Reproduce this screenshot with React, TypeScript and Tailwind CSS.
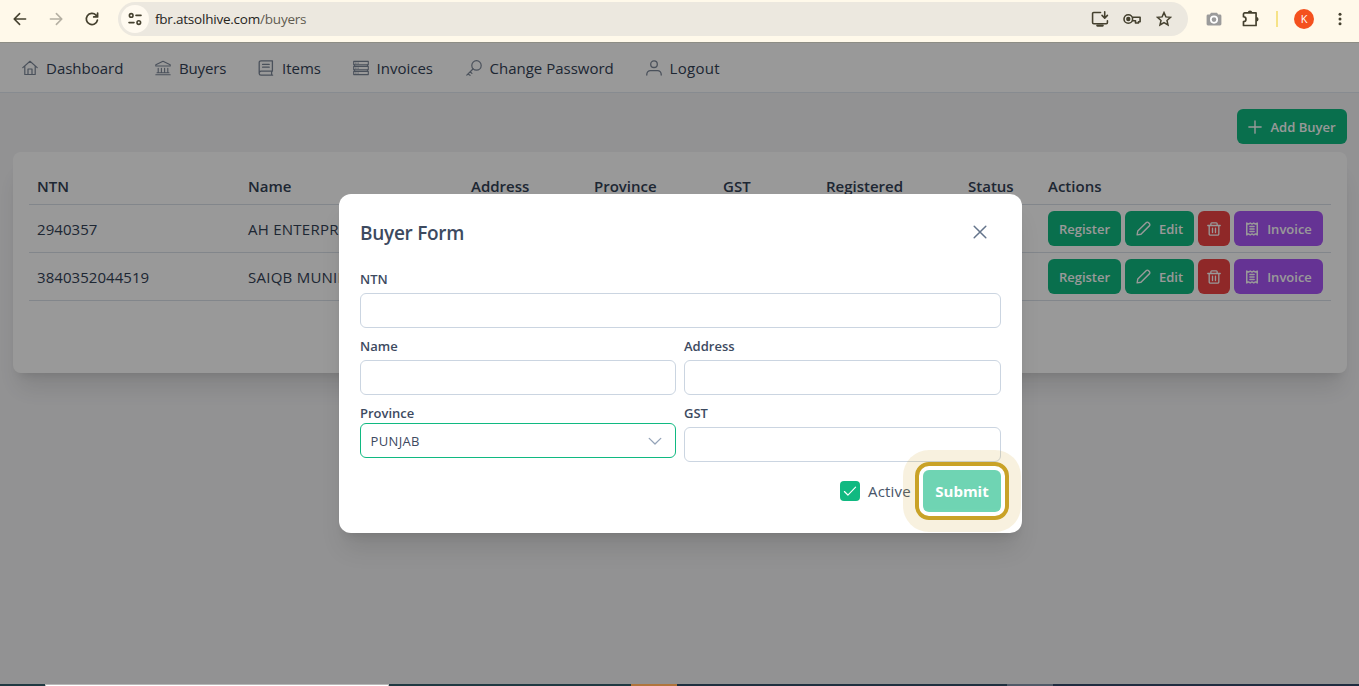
import React, { useState } from 'react';

type IconProps = { className?: string };

const Svg: React.FC<IconProps & { children: React.ReactNode; width?: number }> = ({ className = 'w-4 h-4', children, width = 1.1 }) => (
  <svg
    viewBox="0 0 16 16"
    className={`${className} shrink-0`}
    fill="none"
    stroke="currentColor"
    strokeWidth={width}
    strokeLinecap="round"
    strokeLinejoin="round"
  >
    {children}
  </svg>
);

const HomeIcon = () => (
  <Svg width={1.2}>
    <path d="M.8 7.6 8 1.3l7.2 6.3M2.8 6.2v8.3h10.4V6.2M6 14.5V9h4v5.5" />
  </Svg>
);

const BankIcon = () => (
  <Svg>
    <path d="M.8 6V4.8L8 1.3l7.2 3.5V6zM3.2 8.2v4M6.4 8.2v4M9.6 8.2v4M12.8 8.2v4M2 12.8h12M.8 14.8h14.4" />
  </Svg>
);

const BookIcon = () => (
  <Svg width={1.3}>
    <path d="M14.4 11.2V.8H3A1.8 1.8 0 0 0 1.2 2.6v10.8a1.8 1.8 0 0 0 1.8 1.8h11.6M1.2 13.2a1.9 1.9 0 0 1 1.8-2h11.4M13.6 11.2v4M4.6 4.4h6.6M4.6 7.2h6.6" />
  </Svg>
);

const ServerIcon = () => (
  <Svg width={1.1}>
    <path d="M.7 1.4h14.6v3.4H.7zM.7 6.4h14.6v3.4H.7zM.7 11.4h14.6v3.2H.7z" />
    <path d="M2.8 3.1h.2M5 3.1h.2M2.8 8.1h.2M5 8.1h.2M2.8 13h.2M5 13h.2M1.6 4.8v1.6M14.4 4.8v1.6M1.6 9.8v1.6M14.4 9.8v1.6" />
  </Svg>
);

const KeyIcon = () => (
  <Svg width={1.2}>
    <circle cx="10.5" cy="5.4" r="4.7" />
    <path d="M7.2 8.8.8 15.1M2 14l2 1.3M4.2 11.8l1.7 1.6" />
  </Svg>
);

const UserIcon = () => (
  <Svg width={1.3}>
    <circle cx="8" cy="4.2" r="3.3" />
    <path d="M.8 15v-.8a3.6 3.6 0 0 1 3.6-3.6h7.2a3.6 3.6 0 0 1 3.6 3.6v.8" />
  </Svg>
);

const PencilIcon = () => (
  <Svg className="w-[15px] h-[15px]" width={1.5}>
    <path d="M1.2 14.8l.7-4.1L10.8 1.8a1.8 1.8 0 0 1 2.6 0l.8.8a1.8 1.8 0 0 1 0 2.6l-8.9 8.9z" />
  </Svg>
);

const TrashIcon = () => (
  <Svg className="w-3.5 h-3.5 mt-px" width={1.5}>
    <path d="M.9 4h14.2M4.4 4V1.9a1 1 0 0 1 1-1h5.2a1 1 0 0 1 1 1V4M2.5 4v9.6a1.5 1.5 0 0 0 1.5 1.5h8a1.5 1.5 0 0 0 1.5-1.5V4M6.3 7v5M9.7 7v5" />
  </Svg>
);

const ReceiptIcon = () => (
  <Svg className="w-3.5 h-3.5 mt-px" width={1.7}>
    <path d="M2 1.2l2 1.2 2-1.2 2 1.2 2-1.2 2 1.2 2-1.2v13.6l-2-1.2-2 1.2-2-1.2-2 1.2-2-1.2-2 1.2zM5.6 5.2h4.8M5.6 8h4.8M5.6 10.8h4.8" />
  </Svg>
);

const NAV_ITEMS = [
  { label: 'Dashboard', Icon: HomeIcon, box: 'w-[133px]' },
  { label: 'Buyers', Icon: BankIcon, box: 'w-[103px] tracking-[-0.15px]' },
  { label: 'Items', Icon: BookIcon, box: 'w-[94.5px]' },
  { label: 'Invoices', Icon: ServerIcon, box: 'w-[113px]' },
  { label: 'Change Password', Icon: KeyIcon, box: 'w-[180px]' },
  { label: 'Logout', Icon: UserIcon, box: 'w-[100px] tracking-[0.3px]' },
];

const COLUMNS = [
  { label: 'NTN', box: 'w-[211px]' },
  { label: 'Name', box: 'w-[223px]' },
  { label: 'Address', box: 'w-[123px]' },
  { label: 'Province', box: 'w-[129px]' },
  { label: 'GST', box: 'w-[103px]' },
  { label: 'Registered', box: 'w-[142px]' },
  { label: 'Status', box: 'w-[80px]' },
  { label: 'Actions', box: 'w-[291px]' },
];

const BUYERS = [
  { ntn: '2940357', name: 'AH ENTERPRISES' },
  { ntn: '3840352044519', name: 'SAIQB MUNIR' },
];

const BrowserBar = () => (
  <div className="h-[42px] shrink-0 bg-[#fff9ea] flex items-start pt-[3px] text-[#45412f]">
    <div className="w-[118px] h-8 flex items-center pl-1">
      <span className="w-8 flex justify-center">
        <Svg width={1.6}><path d="M13.6 8H2.4M7.6 2.6 2.2 8l5.4 5.4" /></Svg>
      </span>
      <span className="w-8 ml-1 flex justify-center text-[#b5b0a3]">
        <Svg width={1.6}><path d="M2.4 8h11.2M8.4 2.6 13.8 8l-5.4 5.4" /></Svg>
      </span>
      <span className="w-8 ml-1 flex justify-center">
        <Svg width={1.7}><path d="M13.4 9.2A5.6 5.6 0 1 1 12 4.1l1.4 1.5M13.6 2v3.9H9.7" /></Svg>
      </span>
    </div>
    <div className="w-[1070px] h-[34px] -mt-px rounded-full bg-[#ece8df] flex items-center pl-[3px] pr-2">
      <span className="w-7 h-7 rounded-full bg-[#fffaf0] flex items-center justify-center">
        <Svg width={1.6}>
          <circle cx="4.2" cy="4.4" r="1.8" />
          <path d="M9 4.4h5M2 11.6h5" />
          <circle cx="11.8" cy="11.6" r="1.8" />
        </Svg>
      </span>
      <span className="ml-1.5 pt-0.5 text-[13.5px] leading-none tracking-[-0.22px] text-[#26241c] whitespace-nowrap">
        fbr.atsolhive.com<span className="text-[#5f5b50]">/buyers</span>
      </span>
      <span className="w-8 ml-auto flex justify-center">
        <Svg className="w-[18px] h-[18px]" width={1.4}>
          <path d="M8.5 2.2H2.4a1 1 0 0 0-1 1v8a1 1 0 0 0 1 1h11.2a1 1 0 0 0 1-1V9.6M12.2 1.5v5.4M9.8 4.8l2.4 2.4 2.4-2.4" />
          <path d="M5.6 13.8h4.8" strokeWidth="2" />
        </Svg>
      </span>
      <span className="w-8 flex justify-center">
        <svg viewBox="0 0 18 12" className="w-[18px] h-3" fill="none" stroke="currentColor" strokeWidth="1.6" strokeLinejoin="round">
          <circle cx="5.3" cy="6" r="4.3" />
          <circle cx="5.3" cy="6" r="1.4" fill="currentColor" />
          <path d="M9.2 4.2h7.9v4.6h-1.6V10h-3V7.8H9.2" />
        </svg>
      </span>
      <span className="w-8 flex justify-center">
        <Svg width={1.5}><path strokeLinejoin="miter" d="M8 1.6l1.9 4.3 4.6.4L11 9.4l1 4.6-4-2.4L4 14l1-4.6-3.5-3.1 4.6-.4z" /></Svg>
      </span>
    </div>
    <span className="w-8 h-8 ml-2.5 flex items-center justify-center text-[#9b9b9b]">
      <svg viewBox="0 0 16 14" className="w-4 h-3.5">
        <path fill="currentColor" d="M5 .8h6l1.2 1.8H14A1.4 1.4 0 0 1 15.4 4v8a1.4 1.4 0 0 1-1.4 1.4H2A1.4 1.4 0 0 1 .6 12V4A1.4 1.4 0 0 1 2 2.6h1.8z" />
        <circle cx="8" cy="7.6" r="3.2" fill="#9b9b9b" stroke="#fff" strokeWidth="1.7" />
      </svg>
    </span>
    <span className="w-8 h-8 ml-1 flex items-center justify-center">
      <Svg className="w-[18px] h-[18px]" width={1.5}>
        <path d="M3.2 2.6h10.2v11.2H2.2v-3.4a2.2 2.2 0 0 0 0-4.4V3.6a1 1 0 0 1 1-1z" />
        <path fill="currentColor" stroke="none" d="M6 2.4a2 2 0 0 1 4 0zM13.6 6.2a2 2 0 0 1 0 4z" />
      </Svg>
    </span>
    <span className="w-0.5 h-4 mt-2 ml-2.5 bg-[#f6e388]" />
    <span className="w-5 h-5 mt-1.5 ml-4 rounded-full bg-[#f4511e] text-white text-[11px] flex items-center justify-center">K</span>
    <span className="w-8 h-8 ml-2.5 flex items-center justify-center">
      <Svg>
        <g fill="currentColor" stroke="none">
          <circle cx="8" cy="3.2" r="1.5" />
          <circle cx="8" cy="8" r="1.5" />
          <circle cx="8" cy="12.8" r="1.5" />
        </g>
      </Svg>
    </span>
  </div>
);

const NavBar = () => (
  <nav className="h-[50px] bg-white border-b border-[#e2e8f0] flex items-center pt-0.5 pl-[22px] text-[15px] text-[#334155]">
    {NAV_ITEMS.map(({ label, Icon, box }) => (
      <a key={label} className={`${box} flex items-center gap-2 whitespace-nowrap`}>
        <span className="-mt-px text-[#7c8798]"><Icon /></span>
        {label}
      </a>
    ))}
  </nav>
);

const buttonBase = 'h-[35px] rounded-md text-white text-[13px] font-semibold flex items-center justify-center gap-2 whitespace-nowrap';

const RowActions = () => (
  <div className="flex gap-1">
    <button className={`${buttonBase} w-[73px] bg-[#10b981]`}><span className="pt-[3px]">Register</span></button>
    <button className={`${buttonBase} w-[69px] bg-[#10b981]`}><PencilIcon /><span className="pt-[3px]">Edit</span></button>
    <button className={`${buttonBase} w-8 bg-[#ef4444]`}><TrashIcon /></button>
    <button className={`${buttonBase} w-[89px] bg-[#a855f7]`}><ReceiptIcon /><span className="pt-[3px]">Invoice</span></button>
  </div>
);

const BuyersTable = () => (
  <div className="h-[221px] rounded-lg bg-white shadow-xl p-4">
    <table className="w-[1302px] table-fixed border-collapse text-[15px] text-[#334155]">
      <thead>
        <tr className="h-9 border-b border-[#d9e0e8] text-left">
          {COLUMNS.map((col) => (
            <th key={col.label} className={`${col.box} px-2 py-0 font-semibold`}>{col.label}</th>
          ))}
        </tr>
      </thead>
      <tbody>
        {BUYERS.map((buyer) => (
          <tr key={buyer.ntn} className="h-12 border-b border-[#d9e0e8]">
            <td className="px-2 pt-0.5 tracking-[0.05px]">{buyer.ntn}</td>
            <td className="px-2 pt-0.5 whitespace-nowrap tracking-[0.25px]">{buyer.name}</td>
            <td colSpan={5} />
            <td className="px-2"><RowActions /></td>
          </tr>
        ))}
      </tbody>
    </table>
  </div>
);

const inputStyle = 'block w-full h-[35px] rounded-md border border-[#cbd5e1] bg-white px-2.5 text-[13px] outline-none';

const Field: React.FC<{ label: string }> = ({ label }) => (
  <div>
    <label className="block h-5 leading-5 mb-1 text-[13px] font-semibold">{label}</label>
    <input className={inputStyle} />
  </div>
);

const BuyerForm = () => {
  const [active, setActive] = useState(true);

  return (
    <div className="w-[683px] h-[339px] rounded-xl bg-white shadow-xl pt-[17px] px-[21px] text-[#3d4a5f]">
      <div className="h-[42px] flex items-center justify-between">
        <h2 className="pt-0.5 text-[19px] tracking-[-0.28px] font-semibold">Buyer Form</h2>
        <button className="w-[42px] h-[42px] flex items-center justify-center text-[#64748b]">
          <Svg width={1.5}><path d="M2.2 2.2l11.6 11.6M13.8 2.2 2.2 13.8" /></Svg>
        </button>
      </div>

      <div className="mt-4">
        <Field label="NTN" />
      </div>
      <div className="mt-2 grid grid-cols-[316px_317px] gap-2">
        <Field label="Name" />
        <Field label="Address" />
        <div>
          <label className="block h-5 leading-5 text-[13px] font-semibold">Province</label>
          <div className="h-[35px] rounded-md border border-[#10b981] pl-[9.5px] pr-[13px] flex items-center justify-between text-[13px]">
            <span className="pt-0.5 tracking-[0.35px]">PUNJAB</span>
            <span className="text-[#94a3b8]">
              <Svg className="w-3.5 h-3.5" width={1.5}><path d="M1.4 5 8 11.4 14.6 5" /></Svg>
            </span>
          </div>
        </div>
        <Field label="GST" />
      </div>

      <div className="mt-2 flex items-center justify-end">
        <button
          onClick={() => setActive(!active)}
          className="w-5 h-5 rounded bg-[#10b981] text-white flex items-center justify-center"
        >
          {active && <Svg className="w-3.5 h-3.5" width={1.3}><path d="M1.6 8.6 5.6 12.6 14.4 3.6" /></Svg>}
        </button>
        <span className="ml-2 w-[55px] text-[15px] tracking-[0.2px] text-[#475569]">Active</span>
        <div className="relative">
          <button className="w-[78px] h-[42px] rounded-md bg-[#10b981] text-white text-[15px] font-bold opacity-60">Submit</button>
          {/* Highlight ring around the submit button */}
          <div className="absolute -inset-2 rounded-[14px] border-4 border-[#c9a227] shadow-[0_0_0_12px_rgba(205,160,39,0.15)] pointer-events-none" />
        </div>
      </div>
    </div>
  );
};

const TaskbarEdge = () => (
  <div className="h-0.5 shrink-0 flex bg-[#1f2c40]">
    <div className="w-[45px] bg-[#1f3a42]" />
    <div className="w-[344px] bg-white border-t border-x border-[#b8b8b8]" />
    <div className="w-[242px] bg-[#1f3a42]" />
    <div className="w-[46px] bg-[#b0753c]" />
    <div className="w-[330px] bg-[#1e303f]" />
    <div className="w-[46px] bg-[#505a68]" />
  </div>
);

const App: React.FC = () => {
  return (
    <div className="w-[1359px] h-[686px] overflow-hidden flex flex-col font-['Open_Sans',sans-serif]">
      <BrowserBar />
      <div className="relative flex-1 overflow-hidden border-t border-[#8d8d85] bg-[#f4f4f6]">
        <NavBar />
        <main className="pl-[13px] pr-3 pt-4">
          <div className="flex justify-end mb-2">
            <button className={`${buttonBase} w-[110px] bg-[#10b981]`}>
              <Svg className="w-3.5 h-3.5" width={1.6}><path d="M8 1v14M1 8h14" /></Svg>
              <span className="pt-0.5">Add Buyer</span>
            </button>
          </div>
          <BuyersTable />
        </main>

        {/* Modal mask */}
        <div className="absolute inset-0 bg-black/40 flex items-center justify-center pl-0.5">
          <BuyerForm />
        </div>
      </div>
      <TaskbarEdge />
    </div>
  );
};

export default App;
